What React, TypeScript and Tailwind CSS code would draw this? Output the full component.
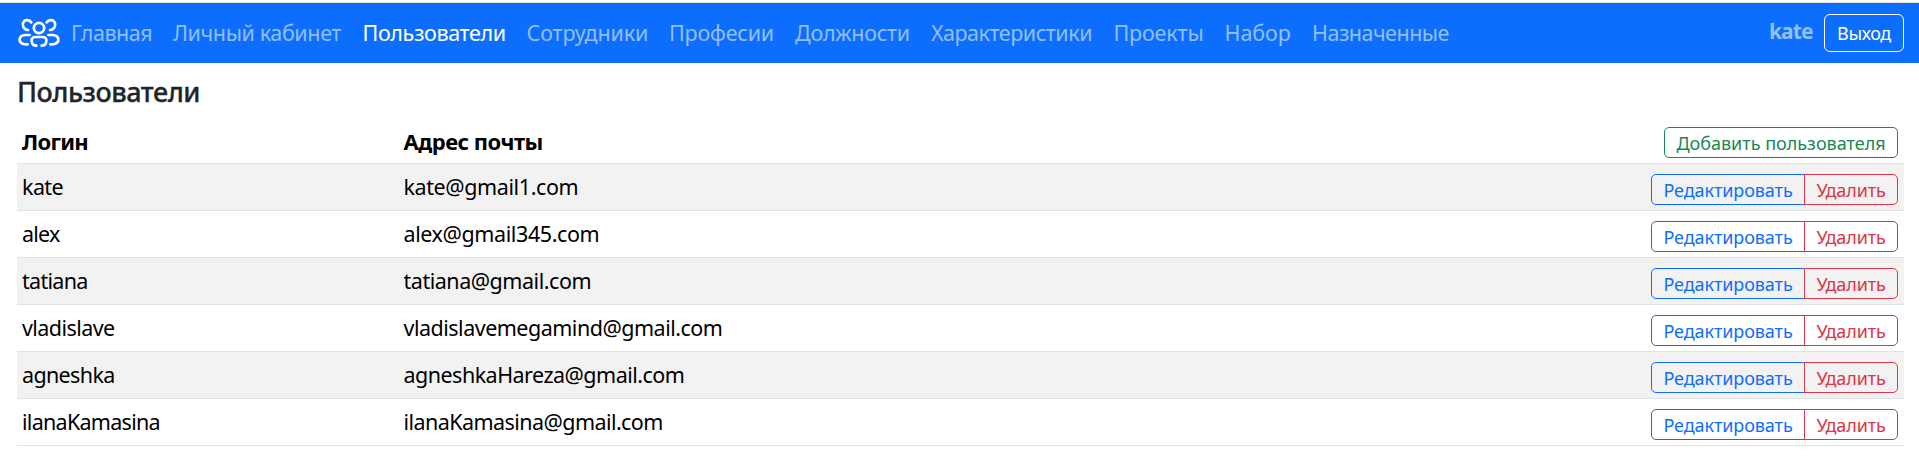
const navItems = [
  { label: "Главная", cls: "w-[102px] tracking-[-0.48px]" },
  { label: "Личный кабинет", cls: "w-[189.5px] tracking-[-0.39px]" },
  { label: "Пользователи", cls: "w-[164px] tracking-[-0.36px]", active: true },
  { label: "Сотрудники", cls: "w-[142.5px] tracking-[-0.12px]" },
  { label: "Професии", cls: "w-[126px] tracking-[-0.2px]" },
  { label: "Должности", cls: "w-[136px] tracking-[-0.28px]" },
  { label: "Характеристики", cls: "w-[182.5px] tracking-[-0.47px]" },
  { label: "Проекты", cls: "w-[111px] tracking-[-0.16px]" },
  { label: "Набор", cls: "w-[87.5px] tracking-[-0.08px]" },
  { label: "Назначенные", cls: "tracking-[-0.52px]" },
];

const users = [
  { login: "kate", email: "kate@gmail1.com", l: "tracking-[-0.6px]", e: "tracking-[-0.4px]" },
  { login: "alex", email: "alex@gmail345.com", l: "tracking-[-0.75px]", e: "tracking-[-0.4px]" },
  { login: "tatiana", email: "tatiana@gmail.com", l: "tracking-[-0.7px]", e: "tracking-[-0.47px]" },
  { login: "vladislave", email: "vladislavemegamind@gmail.com", l: "tracking-[-0.57px]", e: "tracking-[-0.5px]" },
  { login: "agneshka", email: "agneshkaHareza@gmail.com", l: "tracking-[-0.65px]", e: "tracking-[-0.52px]" },
  { login: "ilanaKamasina", email: "ilanaKamasina@gmail.com", l: "tracking-[-0.72px]", e: "tracking-[-0.56px]" },
];

function Logo() {
  return (
    <svg
      viewBox="54 54 126 94"
      className="h-[31.33px] w-[42px] shrink-0"
      fill="none"
      stroke="#fff"
      strokeWidth="8"
      strokeLinecap="round"
    >
      <circle cx="117" cy="87" r="15.5" />
      <path d="M94 70C88 62 76 61 70.5 69C65 78 70 92 84 93" />
      <path d="M140 70C146 62 158 61 163.5 69C169 78 164 92 150 93" />
      <path d="M89 108H76C56 109 54 129 68 134C73 136 78 136 83 136" />
      <path d="M145 108H158C178 109 180 129 166 134C161 136 156 136 151 136" />
      <path d="M109 140C102 140 98 137 96 132C92 121 96 114 107 114H127C138 114 142 121 138 132C136 137 132 140 125 140" />
    </svg>
  );
}

function Navbar() {
  return (
    <nav className="mt-0.5 flex h-[61px] items-center border-t border-[#e3dfdc] bg-[#0d6efd] pr-[15px] pl-[18px]">
      <a href="#" className="mr-[11px]">
        <Logo />
      </a>
      <ul className="flex pb-px text-[21.5px] leading-[34px]">
        {navItems.map((item) => (
          <li
            key={item.label}
            className={`${item.cls} whitespace-nowrap ${item.active ? "text-white" : "text-[#92bffe]"}`}
          >
            {item.label}
          </li>
        ))}
      </ul>
      <span className="ml-auto pb-1 text-[21px] leading-8 font-bold tracking-[-0.95px] text-[#92bffe]">kate</span>
      <button className="ml-[11.5px] h-[38px] w-20 rounded-[6px] border border-white text-[18px] tracking-[-0.35px] text-white">
        Выход
      </button>
    </nav>
  );
}

export default function App() {
  return (
    <div className="flex h-[468px] flex-col overflow-hidden bg-white font-['Noto_Sans',sans-serif]">
      <Navbar />
      <main className="pr-[15px] pl-[17px]">
        <h1 className="pt-[11px] text-[27px] leading-[35px] font-medium tracking-[-0.48px] text-[#212529] [-webkit-text-stroke:0.3px_#212529]">
          Пользователи
        </h1>
        <div className="mt-[12px] flex h-[43px] items-center border-b border-[#dee2e6] pr-1.5 pl-[5px] text-[22px] leading-[34px] font-bold text-black">
          <div className="w-[381.5px] pb-0.5 tracking-[-0.7px]">Логин</div>
          <div className="pb-0.5 tracking-[-0.52px]">Адрес почты</div>
          <button className="ml-auto h-[31px] w-[234px] rounded-[5px] border border-[#198754] pt-px text-[18px] leading-[28px] font-normal whitespace-nowrap text-[#198754]">
            Добавить пользователя
          </button>
        </div>
        {users.map((u) => (
          <div
            key={u.login}
            className="flex h-[47px] items-center border-b border-[#dee2e6] pr-1.5 pl-[5px] text-[21.5px] leading-[34px] text-black nth-[even]:bg-white nth-[odd]:bg-[#f2f2f2]"
          >
            <div className={`w-[381.5px] ${u.l}`}>{u.login}</div>
            <div className={u.e}>{u.email}</div>
            <div className="mt-[5px] ml-auto flex text-[18px] leading-[28px]">
              <button className="h-[31px] w-[154px] rounded-l-[5px] border border-[#0d6efd] pt-px tracking-[-0.08px] text-[#0d6efd]">
                Редактировать
              </button>
              <button className="-ml-px h-[31px] w-[94px] rounded-r-[5px] border border-[#dc3545] pt-px tracking-[-0.13px] text-[#dc3545]">
                Удалить
              </button>
            </div>
          </div>
        ))}
      </main>
    </div>
  );
}
